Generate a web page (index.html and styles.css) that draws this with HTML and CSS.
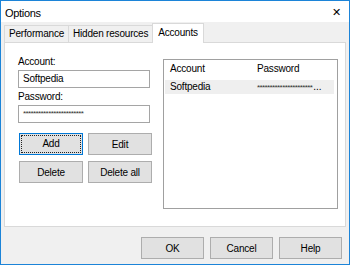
FILE: index.html
```html
<!DOCTYPE html>
<html lang="en">
<head>
  <meta charset="UTF-8" />
  <title>Options</title>
  <link rel="stylesheet" href="styles.css">
</head>
<body>
  <div class="window">
    <div class="titlebar">
      <span class="title">Options</span>
      <span class="close">&#x2715;</span>
    </div>

    <!-- Tab strip -->
    <div class="tabs">
      <div class="tab">Performance</div>
      <div class="tab">Hidden resources</div>
      <div class="tab active">Accounts</div>
    </div>

    <div class="panel">
      <div class="account-form">
        <label class="field-label">Account:</label>
        <div class="textbox">Softpedia</div>
        <label class="field-label">Password:</label>
        <div class="textbox secret">************************</div>

        <div class="button-grid">
          <button class="btn default"><span>Add</span></button>
          <button class="btn">Edit</button>
          <button class="btn">Delete</button>
          <button class="btn">Delete all</button>
        </div>
      </div>

      <div class="listview">
        <div class="list-row header">
          <span class="col-account">Account</span>
          <span class="col-password">Password</span>
        </div>
        <div class="list-row selected">
          <span class="col-account">Softpedia</span>
          <span class="col-password"><span class="secret">**********************</span><span class="more">...</span></span>
        </div>
      </div>
    </div>

    <div class="footer">
      <button class="btn wide">OK</button>
      <button class="btn wide">Cancel</button>
      <button class="btn wide">Help</button>
    </div>
  </div>
</body>
</html>
```

FILE: styles.css
```css
/* Base */
body {
  margin: 0;
  font-family: 'Liberation Sans', Arial, sans-serif;
  font-size: 10px;
  letter-spacing: -0.2px;
  color: #000;
  background: #fff;
}

.window {
  width: 350px;
  height: 265px;
  box-sizing: border-box;
  border: 1px solid #1c84d8;
  background-color: #f0f0f0;
  display: flex;
  flex-direction: column;
}

/* Title bar */
.titlebar {
  height: 21px;
  flex-shrink: 0;
  background: #fff;
  display: flex;
  align-items: center;
  justify-content: space-between;
  padding: 0 8px 0 4px;
}

.title {
  font-size: 11px;
  letter-spacing: -0.3px;
  margin-top: 2px;
}

.close {
  font-family: 'DejaVu Sans', sans-serif;
  font-size: 11px;
  margin-top: 2px;
}

/* Tabs */
.tabs {
  display: flex;
  align-items: flex-end;
  height: 20px;
  flex-shrink: 0;
  padding-left: 3px;
}

.tab {
  height: 16px;
  line-height: 16px;
  padding: 0 4px;
  border: 1px solid #d9d9d9;
  border-bottom: none;
  background: #f0f0f0;
  margin-right: -1px;
}

.tab.active {
  height: 19px;
  line-height: 18px;
  background: #fff;
  position: relative;
  top: 1px;
  z-index: 1;
  padding: 0 5px;
}

.panel {
  box-sizing: border-box;
  flex-shrink: 0;
  margin: 0 3px;
  height: 185px;
  border: 1px solid #d9d9d9;
  box-shadow: inset 0 0 0 1px #fff;
  background: #fff;
  display: flex;
  padding: 13px 7px 0 13px;
  gap: 12px;
}

/* Left column */
.account-form {
  width: 133px;
  display: flex;
  flex-direction: column;
}

.field-label {
  height: 12px;
  margin-bottom: 2px;
}

.textbox {
  height: 16px;
  line-height: 16px;
  border: 1px solid #a5a5a5;
  padding: 0 4px;
  margin-bottom: 3px;
  width: 122px;
}

.secret {
  font-size: 8px;
  letter-spacing: -0.6px;
  color: #333;
}

.button-grid {
  display: grid;
  grid-template-columns: 64px 64px;
  gap: 6px 5px;
  margin-top: 7px;
  margin-left: 1px;
}

.btn {
  font-family: inherit;
  font-size: 10px;
  letter-spacing: -0.2px;
  height: 22px;
  padding: 0;
  background: #e1e1e1;
  border: 1px solid #adadad;
  color: #000;
}

.btn.default {
  border-color: #0078d7;
  padding: 1px;
}

.btn.default span {
  display: block;
  height: 16px;
  line-height: 16px;
  border: 1px dotted #222;
}

/* List view */
.listview {
  width: 173px;
  height: 148px;
  margin-top: 3px;
  border: 1px solid #a0a0a0;
  background: #fff;
}

.list-row {
  display: flex;
  height: 14px;
  line-height: 14px;
  padding-left: 6px;
  margin-right: 3px;
}

.list-row.header {
  height: 18px;
  line-height: 18px;
  margin-bottom: 2px;
}

.list-row.selected {
  background: #efefef;
  margin-left: 1px;
  padding-left: 5px;
}

.col-account {
  width: 87px;
}

.more {
  letter-spacing: 0;
  margin-left: 1px;
}

/* Dialog buttons */
.footer {
  flex: 1;
  display: flex;
  justify-content: flex-end;
  gap: 6px;
  padding: 10px 7px 0 0;
}

.btn.wide {
  width: 63px;
}
```
